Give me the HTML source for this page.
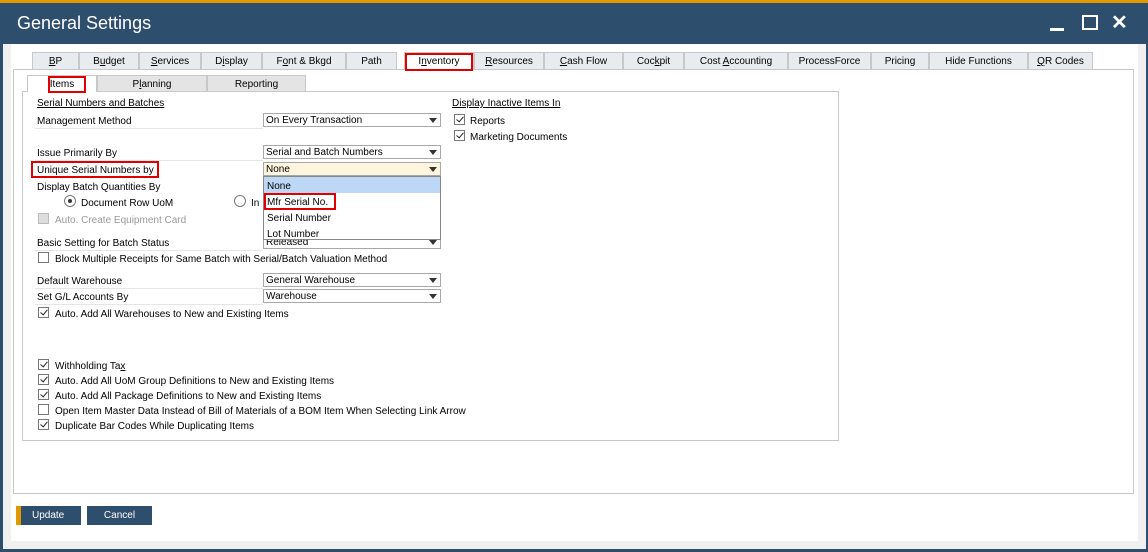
<!DOCTYPE html>
<html><head><meta charset="utf-8"><style>
*{box-sizing:border-box;margin:0;padding:0}
body{width:1148px;height:552px;position:relative;overflow:hidden;background:#2e4e6e;font-family:"Liberation Sans",Tahoma,sans-serif;font-size:10px;color:#000}
.a{position:absolute;white-space:nowrap}
#top{left:0;top:0;width:1148px;height:3px;background:#e09a00}
#title{left:17px;top:13px;font-size:18px;color:#fff}
#frame{left:3px;top:44px;width:1143px;height:505px;background:#f0f0f0}
#white{left:11px;top:44px;width:1127px;height:497px;background:#fff}
.tab{position:absolute;top:52px;height:17px;background:#e8ecf0;border:1px solid #c8c8c8;border-bottom:none;text-align:center;line-height:18px}
.tab.sel{background:#fff;height:18px}
.st{position:absolute;top:75px;height:16px;background:#e4e4e4;border:1px solid #c8c8c8;border-bottom:none;text-align:center;line-height:17px}
.st.sel{background:#fff;height:17px}
.box{position:absolute;border:1px solid #c8c8c8}
.red{position:absolute;border:2px solid #e00000}
.lbl{position:absolute;white-space:nowrap;margin-top:2px}
.ul{text-decoration:underline}
.line{position:absolute;height:1px;background:#e6e6e6}
.dd{position:absolute;height:14px;border:1px solid #a8a8a8;background:#fff;padding-left:2px;line-height:14px;white-space:nowrap}
.dd:after{content:"";position:absolute;right:3px;top:4px;border-left:4px solid transparent;border-right:4px solid transparent;border-top:5px solid #333}
.cb{position:absolute;width:11px;height:11px;border:1px solid #777;background:#fff}
.cb.c:after{content:"";position:absolute;left:3px;top:0px;width:3px;height:6px;border:solid #222;border-width:0 1.5px 1.5px 0;transform:rotate(40deg)}
.btn{position:absolute;top:506px;height:19px;background:#2e4e6e;color:#fff;line-height:20px}
</style></head><body>
<div class="a" id="top"></div>
<div class="a" id="title">General Settings</div>
<div class="a" style="left:1050px;top:28px;width:14px;height:3px;background:#fff"></div>
<div class="a" style="left:1082px;top:15px;width:16px;height:15px;border:2px solid #fff"></div>
<div class="a" style="left:1111px;top:10px;color:#fff;font-size:20px;font-weight:bold">✕</div>
<div class="a" id="frame"></div>
<div class="a" id="white"></div>

<div class="box" style="left:13px;top:69px;width:1121px;height:425px"></div>
<div class="tab" style="left:32px;width:47px"><span class="ul">B</span>P</div>
<div class="tab" style="left:79px;width:60px">B<span class="ul">u</span>dget</div>
<div class="tab" style="left:139px;width:62px"><span class="ul">S</span>ervices</div>
<div class="tab" style="left:201px;width:61px">D<span class="ul">i</span>splay</div>
<div class="tab" style="left:262px;width:84px">F<span class="ul">o</span>nt &amp; Bkgd</div>
<div class="tab" style="left:346px;width:51px">Path</div>
<div class="tab sel" style="left:404px;width:70px">I<span class="ul">n</span>ventory</div>
<div class="tab" style="left:474px;width:70px"><span class="ul">R</span>esources</div>
<div class="tab" style="left:544px;width:79px"><span class="ul">C</span>ash Flow</div>
<div class="tab" style="left:623px;width:61px">Coc<span class="ul">k</span>pit</div>
<div class="tab" style="left:684px;width:104px">Cost <span class="ul">A</span>ccounting</div>
<div class="tab" style="left:788px;width:83px">ProcessForce</div>
<div class="tab" style="left:871px;width:58px">Pricing</div>
<div class="tab" style="left:929px;width:99px">Hide Functions</div>
<div class="tab" style="left:1028px;width:65px"><span class="ul">Q</span>R Codes</div>
<div class="red" style="left:405px;top:53px;width:68px;height:18px"></div>

<div class="box" style="left:22px;top:91px;width:817px;height:350px"></div>
<div class="st sel" style="left:27px;width:70px">Items</div>
<div class="st" style="left:97px;width:110px">P<span class="ul">l</span>anning</div>
<div class="st" style="left:207px;width:99px">Reporting</div>
<div class="red" style="left:48px;top:76px;width:38px;height:17px"></div>

<div class="lbl ul" style="left:37px;top:96px">Serial Numbers and Batches</div>
<div class="lbl ul" style="left:452px;top:96px">Display Inactive Items In</div>
<div class="cb c" style="left:454px;top:114px"></div><div class="lbl" style="left:470px;top:114px">Reports</div>
<div class="cb c" style="left:454px;top:130px"></div><div class="lbl" style="left:470px;top:130px">Marketing Documents</div>

<div class="lbl" style="left:37px;top:114px">Management Method</div><div class="line" style="left:35px;top:128px;width:228px"></div>
<div class="dd" style="left:263px;top:113px;width:178px">On Every Transaction</div>
<div class="lbl" style="left:37px;top:146px">Issue Primarily By</div><div class="line" style="left:35px;top:160px;width:228px"></div>
<div class="dd" style="left:263px;top:145px;width:178px">Serial and Batch Numbers</div>
<div class="lbl" style="left:37px;top:163px">Unique Serial Numbers by</div>
<div class="red" style="left:31px;top:161px;width:128px;height:17px"></div>
<div class="dd" style="left:263px;top:162px;width:178px;background:#fdf5de">None</div>
<div class="lbl" style="left:37px;top:180px">Display Batch Quantities By</div>
<div class="a" style="left:64px;top:195px;width:12px;height:12px;border:1px solid #777;border-radius:50%;background:#fff"><div style="position:absolute;left:3px;top:3px;width:4px;height:4px;border-radius:50%;background:#333"></div></div>
<div class="lbl" style="left:81px;top:196px">Document Row UoM</div>
<div class="a" style="left:234px;top:195px;width:12px;height:12px;border:1px solid #777;border-radius:50%;background:#fff"></div>
<div class="lbl" style="left:251px;top:196px">In</div>
<div class="cb" style="left:38px;top:213px;background:#ddd;border-color:#bbb"></div><div class="lbl" style="left:55px;top:213px;color:#999">Auto. Create Equipment Card</div>
<div class="lbl" style="left:37px;top:236px">Basic Setting for Batch Status</div><div class="line" style="left:35px;top:250px;width:228px"></div>
<div class="dd" style="left:263px;top:235px;width:178px">Released</div>
<div class="a" style="left:263px;top:176px;width:178px;height:64px;border:1px solid #888;background:#fff"></div>
<div class="a" style="left:264px;top:177px;width:176px;height:16px;background:#bcd8f6"></div>
<div class="lbl" style="left:267px;top:179px">None</div>
<div class="lbl" style="left:267px;top:195px">Mfr Serial No.</div>
<div class="red" style="left:264px;top:193px;width:72px;height:17px"></div>
<div class="lbl" style="left:267px;top:211px">Serial Number</div>
<div class="lbl" style="left:267px;top:227px">Lot Number</div>
<div class="cb" style="left:38px;top:252px"></div><div class="lbl" style="left:55px;top:252px">Block Multiple Receipts for Same Batch with Serial/Batch Valuation Method</div>
<div class="lbl" style="left:37px;top:274px">Default Warehouse</div><div class="line" style="left:35px;top:288px;width:228px"></div>
<div class="dd" style="left:263px;top:273px;width:178px">General Warehouse</div>
<div class="lbl" style="left:37px;top:290px">Set G/L Accounts By</div><div class="line" style="left:35px;top:304px;width:228px"></div>
<div class="dd" style="left:263px;top:289px;width:178px">Warehouse</div>
<div class="cb c" style="left:38px;top:307px"></div><div class="lbl" style="left:55px;top:307px">Auto. Add All Warehouses to New and Existing Items</div>
<div class="cb c" style="left:38px;top:359px"></div><div class="lbl" style="left:55px;top:359px">Withholding Ta<span class="ul">x</span></div>
<div class="cb c" style="left:38px;top:374px"></div><div class="lbl" style="left:55px;top:374px">Auto. Add All UoM Group Definitions to New and Existing Items</div>
<div class="cb c" style="left:38px;top:389px"></div><div class="lbl" style="left:55px;top:389px">Auto. Add All Package Definitions to New and Existing Items</div>
<div class="cb" style="left:38px;top:404px"></div><div class="lbl" style="left:55px;top:404px">Open Item Master Data Instead of Bill of Materials of a BOM Item When Selecting Link Arrow</div>
<div class="cb c" style="left:38px;top:419px"></div><div class="lbl" style="left:55px;top:419px">Duplicate Bar Codes While Duplicating Items</div>

<div class="btn" style="left:16px;width:65px;border-left:5px solid #e09a00;padding-left:11px">Update</div>
<div class="btn" style="left:87px;width:65px;text-align:center">Cancel</div>
</body></html>
